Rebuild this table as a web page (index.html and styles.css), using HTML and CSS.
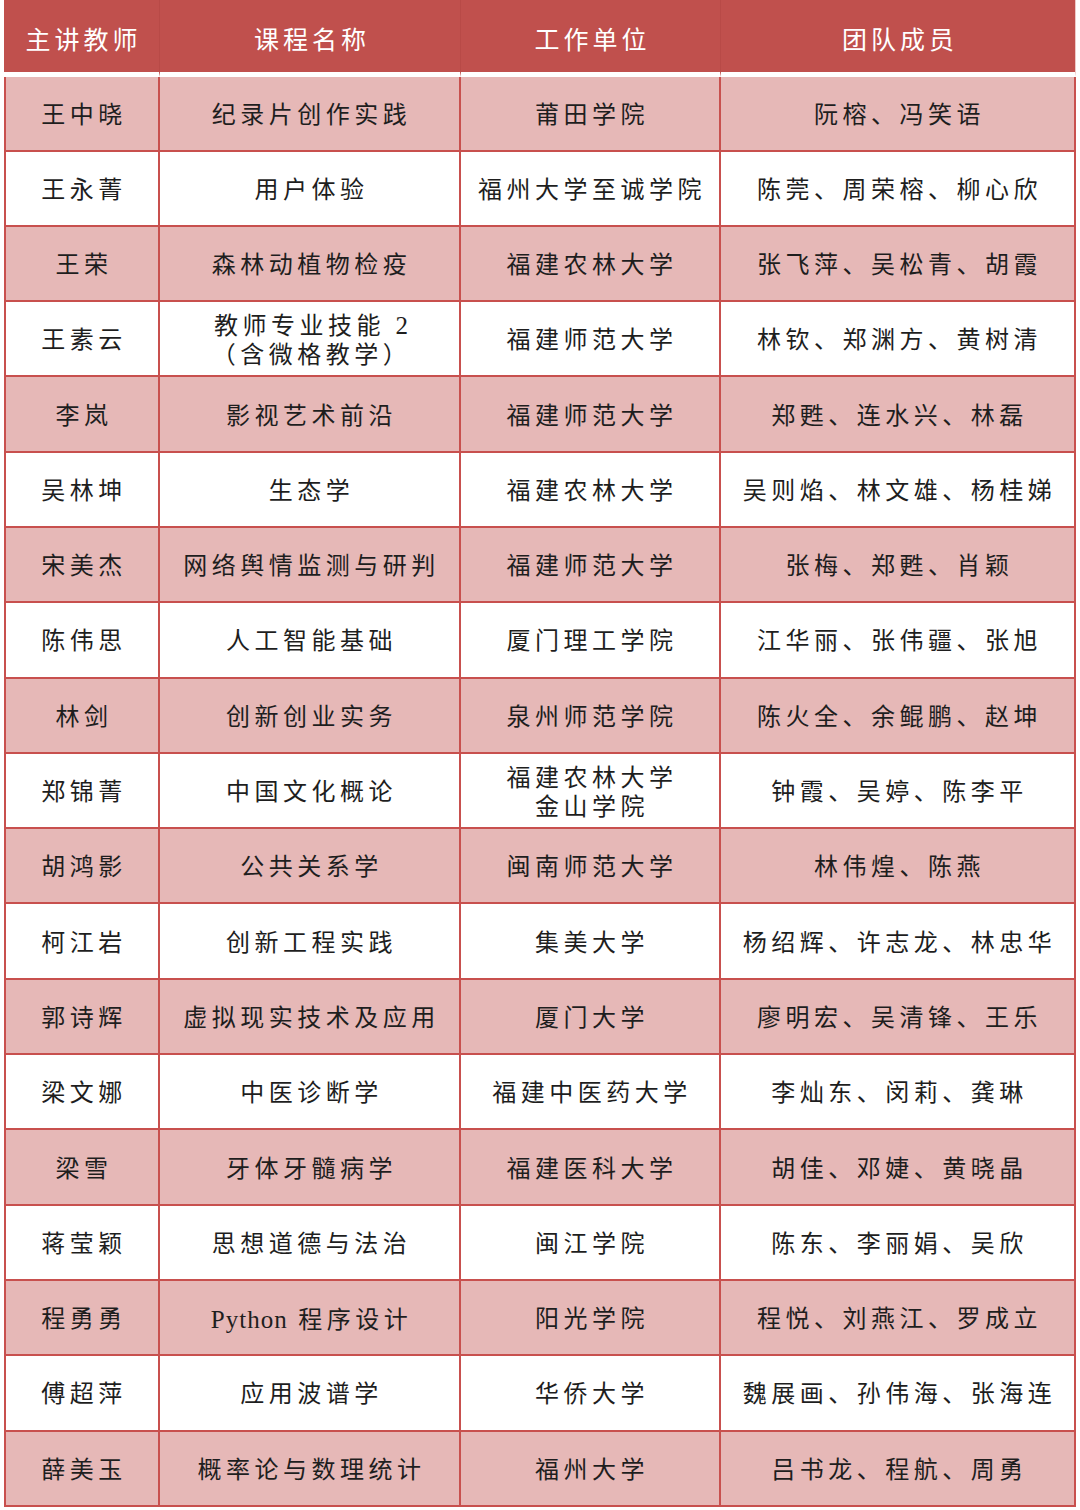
FILE: index.html
```html
<!DOCTYPE html>
<html lang="zh-CN">
<head>
<meta charset="utf-8">
<title>主讲教师名单</title>
<link rel="stylesheet" href="styles.css">
</head>
<body>
<div class="wrap">
<table class="roster">
<colgroup>
<col class="c1"><col class="c2"><col class="c3"><col class="c4">
</colgroup>
<thead>
<tr><th>主讲教师</th><th>课程名称</th><th>工作单位</th><th>团队成员</th></tr>
</thead>
<tbody>
<tr class="pink"><td>王中晓</td><td>纪录片创作实践</td><td>莆田学院</td><td>阮榕、冯笑语</td></tr>
<tr><td>王永菁</td><td>用户体验</td><td>福州大学至诚学院</td><td>陈莞、周荣榕、柳心欣</td></tr>
<tr class="pink"><td>王荣</td><td>森林动植物检疫</td><td>福建农林大学</td><td>张飞萍、吴松青、胡霞</td></tr>
<tr><td>王素云</td><td>教师专业技能 <span class="latin">2</span><br>（含微格教学）</td><td>福建师范大学</td><td>林钦、郑渊方、黄树清</td></tr>
<tr class="pink"><td>李岚</td><td>影视艺术前沿</td><td>福建师范大学</td><td>郑甦、连水兴、林磊</td></tr>
<tr><td>吴林坤</td><td>生态学</td><td>福建农林大学</td><td>吴则焰、林文雄、杨桂娣</td></tr>
<tr class="pink"><td>宋美杰</td><td>网络舆情监测与研判</td><td>福建师范大学</td><td>张梅、郑甦、肖颖</td></tr>
<tr><td>陈伟思</td><td>人工智能基础</td><td>厦门理工学院</td><td>江华丽、张伟疆、张旭</td></tr>
<tr class="pink"><td>林剑</td><td>创新创业实务</td><td>泉州师范学院</td><td>陈火全、余鲲鹏、赵坤</td></tr>
<tr><td>郑锦菁</td><td>中国文化概论</td><td>福建农林大学<br>金山学院</td><td>钟霞、吴婷、陈李平</td></tr>
<tr class="pink"><td>胡鸿影</td><td>公共关系学</td><td>闽南师范大学</td><td>林伟煌、陈燕</td></tr>
<tr><td>柯江岩</td><td>创新工程实践</td><td>集美大学</td><td>杨绍辉、许志龙、林忠华</td></tr>
<tr class="pink"><td>郭诗辉</td><td>虚拟现实技术及应用</td><td>厦门大学</td><td>廖明宏、吴清锋、王乐</td></tr>
<tr><td>梁文娜</td><td>中医诊断学</td><td>福建中医药大学</td><td>李灿东、闵莉、龚琳</td></tr>
<tr class="pink"><td>梁雪</td><td>牙体牙髓病学</td><td>福建医科大学</td><td>胡佳、邓婕、黄晓晶</td></tr>
<tr><td>蒋莹颖</td><td>思想道德与法治</td><td>闽江学院</td><td>陈东、李丽娟、吴欣</td></tr>
<tr class="pink"><td>程勇勇</td><td><span class="latin">Python</span> 程序设计</td><td>阳光学院</td><td>程悦、刘燕江、罗成立</td></tr>
<tr><td>傅超萍</td><td>应用波谱学</td><td>华侨大学</td><td>魏展画、孙伟海、张海连</td></tr>
<tr class="pink"><td>薛美玉</td><td>概率论与数理统计</td><td>福州大学</td><td>吕书龙、程航、周勇</td></tr>
</tbody>
</table>
</div>
</body>
</html>
```

FILE: styles.css
```css
html, body {
  margin: 0;
  padding: 0;
  background: #ffffff;
}

.wrap {
  padding-left: 4px;
}

.roster {
  width: 1072px;
  table-layout: fixed;
  border-collapse: separate;
  border-spacing: 0;
  font-family: "Liberation Serif", "Noto Sans CJK SC", serif;
  color: #1e1e1e;
}

.c1 { width: 156px; }
.c2 { width: 301px; }
.c3 { width: 260px; }
.c4 { width: 355px; }

.roster th {
  box-sizing: border-box;
  height: 77px;
  padding: 3px 0 0 4px;
  background: #c0504d;
  background-clip: padding-box;
  border-bottom: 5px solid #ffffff;
  border-right: 1px solid #b84a47;
  color: #ffffff;
  font-family: "Noto Sans CJK SC", sans-serif;
  font-size: 25px;
  font-weight: 400;
  letter-spacing: 4px;
  text-align: center;
  vertical-align: middle;
}

.roster th:last-child {
  border-right: 1px solid #efc9c8;
}

.roster td {
  box-sizing: border-box;
  height: 75.3px;
  padding: 4px 0 0 4px;
  border-right: 2px solid #c8504e;
  border-bottom: 2px solid #c8504e;
  font-size: 24px;
  line-height: 29px;
  letter-spacing: 4.5px;
  text-align: center;
  vertical-align: middle;
  font-weight: 400;
}

.roster tbody tr:first-child td {
  height: 74.5px;
}

.roster td:first-child {
  border-left: 2px solid #c8504e;
}

.roster tr.pink td {
  background: #e6b8b7;
}

.latin {
  font-size: 25px;
  letter-spacing: 1px;
}
```
